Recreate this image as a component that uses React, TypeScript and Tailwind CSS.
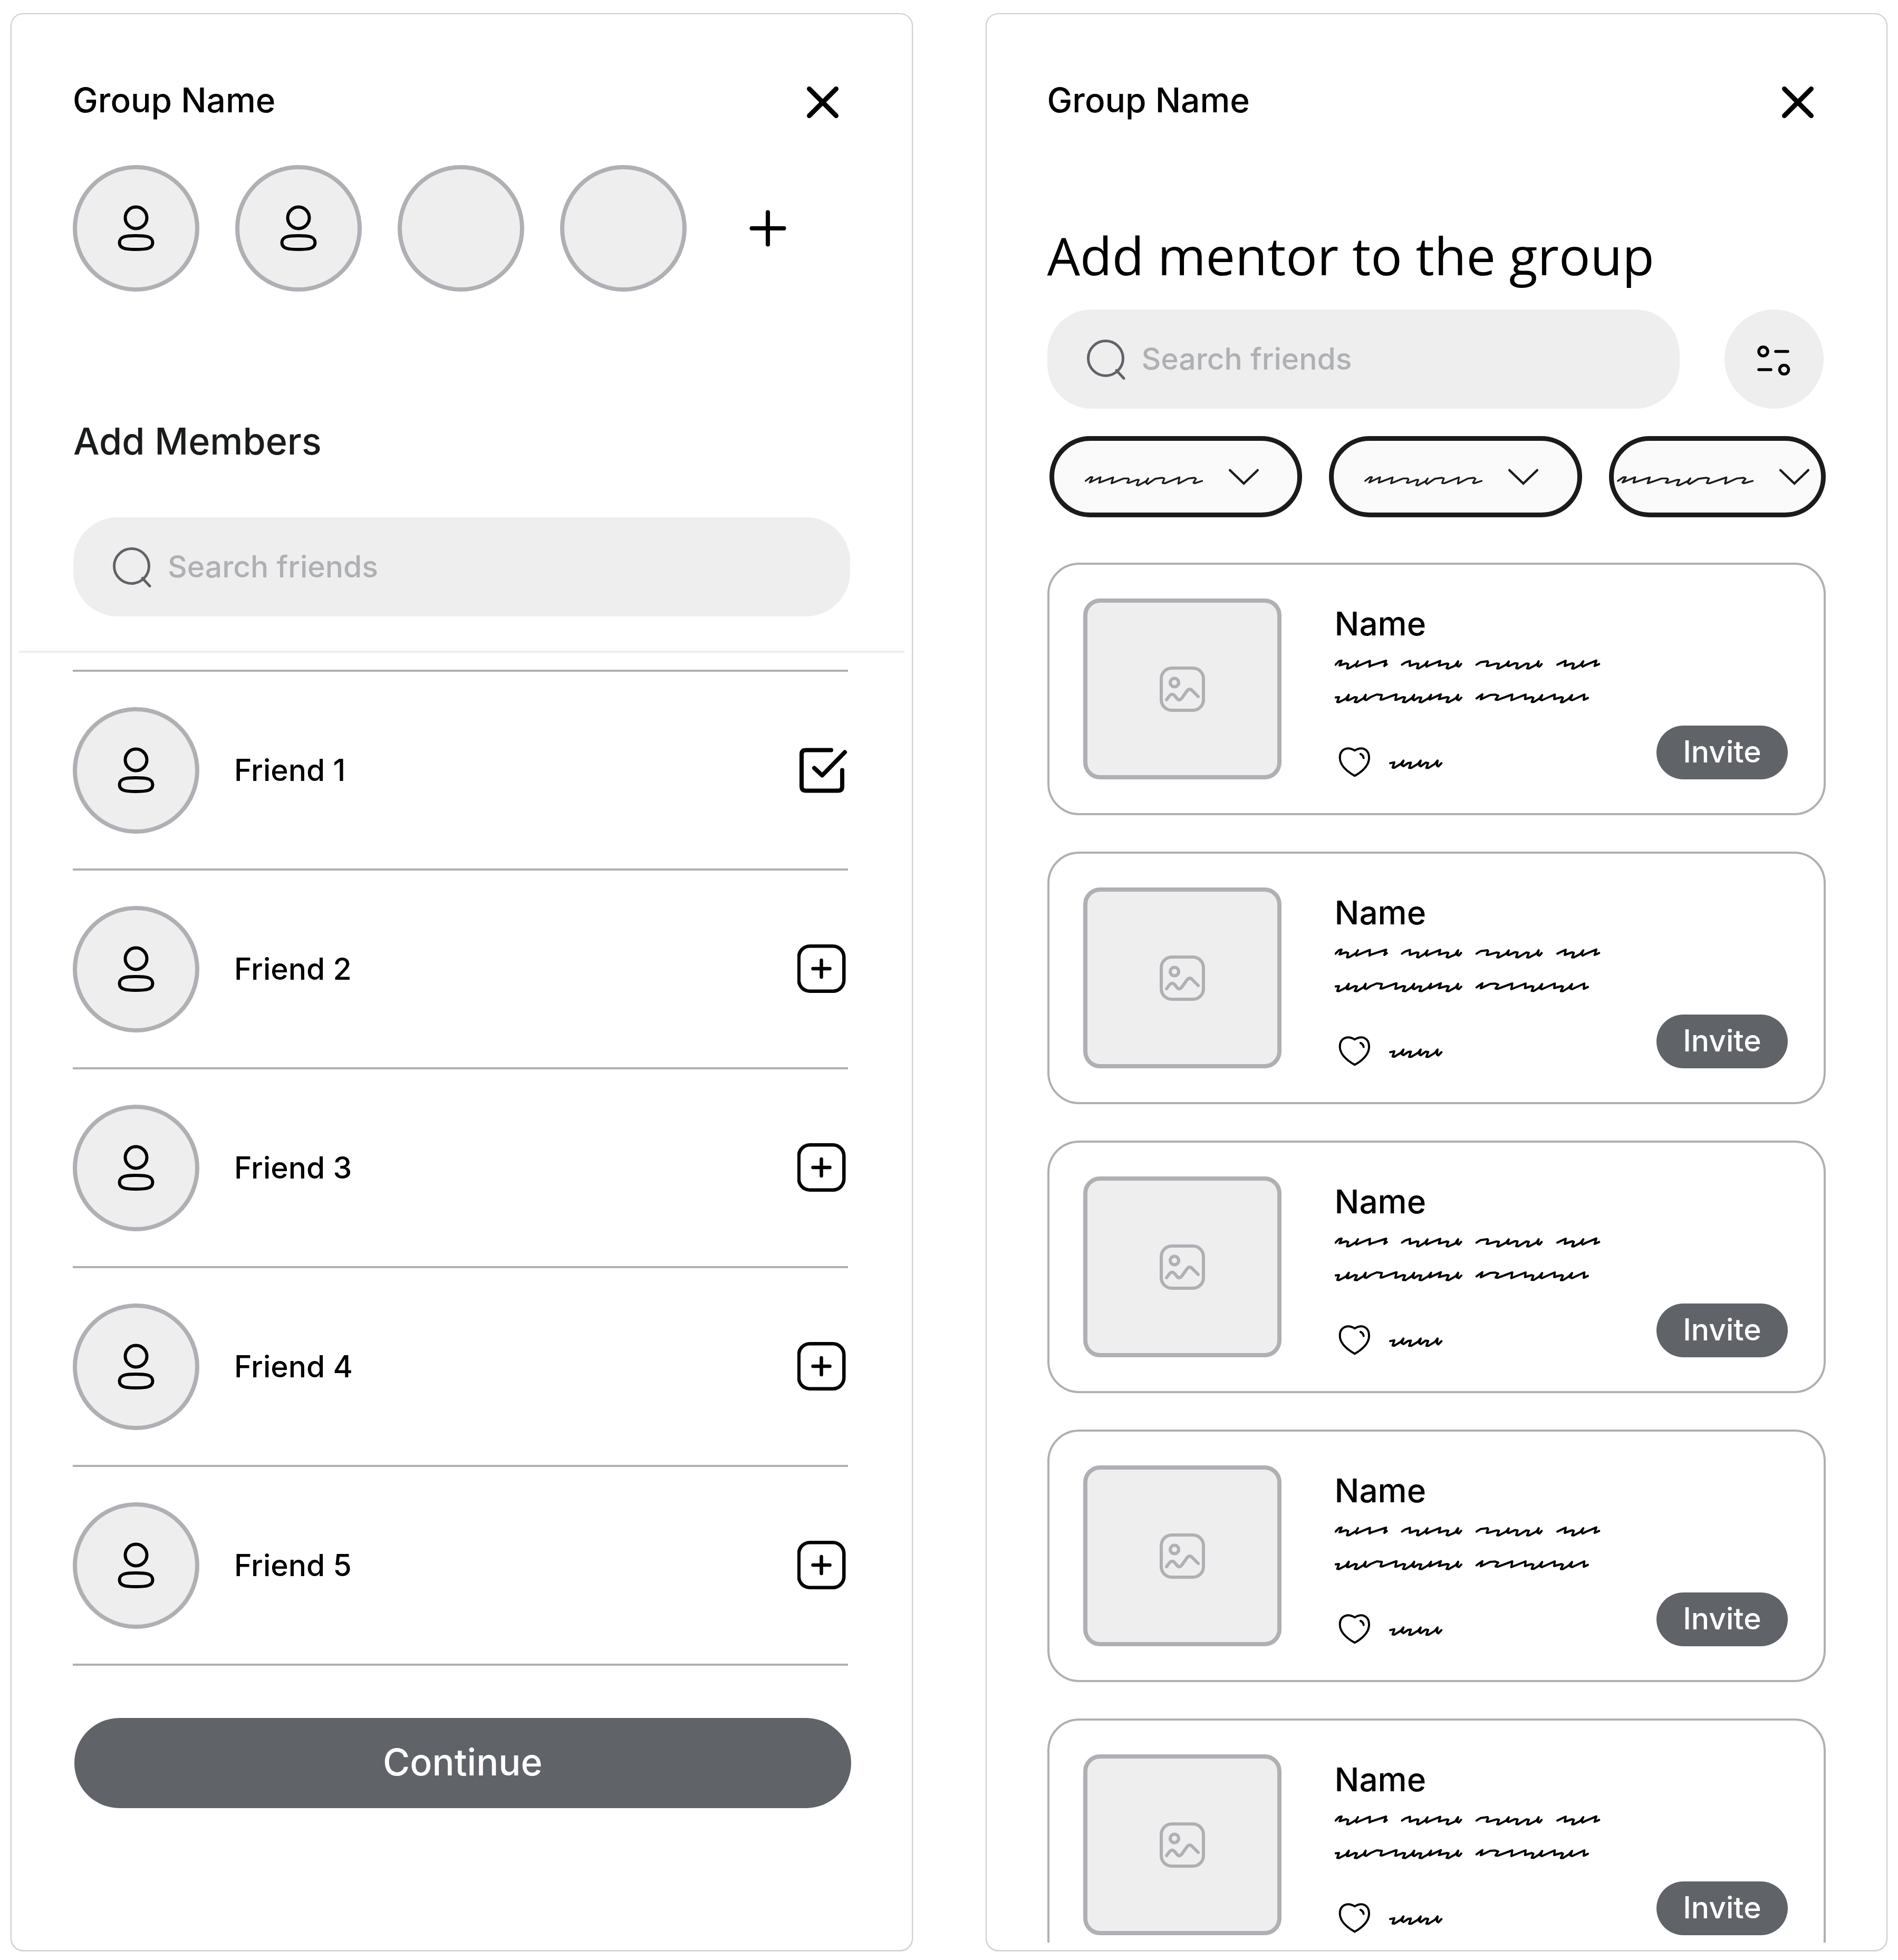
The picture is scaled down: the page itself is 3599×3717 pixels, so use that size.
import React from "react";
import { clsx } from "clsx";

const friends = [
  { id: 1, name: "Friend 1", added: true },
  { id: 2, name: "Friend 2", added: false },
  { id: 3, name: "Friend 3", added: false },
  { id: 4, name: "Friend 4", added: false },
  { id: 5, name: "Friend 5", added: false },
];

const mentors = [1, 2, 3, 4, 5];

function CloseIcon() {
  return (
    <svg viewBox="0 0 74 74" className="size-[74px]" fill="none" stroke="currentColor" strokeWidth="9" strokeLinecap="round">
      <path d="M11.5 11.5 62.5 62.5M62.5 11.5 11.5 62.5" />
    </svg>
  );
}

function PlusIcon() {
  return (
    <svg viewBox="0 0 76 76" className="size-[76px]" fill="none" stroke="currentColor" strokeWidth="8" strokeLinecap="round">
      <path d="M38 7.5V68.5M7.5 38H68.5" />
    </svg>
  );
}

function PersonIcon() {
  return (
    <svg viewBox="0 0 72 90" className="h-[90px] w-[72px]" fill="none" stroke="#000" strokeWidth="6">
      <circle cx="36" cy="25" r="20.5" />
      <path d="M36 59C54 59 67.5 60 67.5 72S54 85 36 85 4.5 84 4.5 72 18 59 36 59Z" />
    </svg>
  );
}

function SearchIcon() {
  return (
    <svg viewBox="0 -3 76 80" className="h-[80px] w-[76px] shrink-0" fill="none" stroke="#5f6368" strokeWidth="5" strokeLinecap="round">
      <circle cx="35.5" cy="35.5" r="33" />
      <path d="M56 58.5 70 73.5" />
    </svg>
  );
}

function CheckBoxIcon() {
  return (
    <svg viewBox="0 0 96 96" className="size-24" fill="none" stroke="currentColor" strokeWidth="8" strokeLinecap="round" strokeLinejoin="round">
      <path d="M64 9.5H16Q8 9.5 8 17.5V78.5Q8 86.5 16 86.5H77Q85 86.5 85 78.5V47.5" />
      <path d="M32 43.5 47 57.5 90 13.5" />
    </svg>
  );
}

function AddBoxIcon() {
  return (
    <svg viewBox="0 0 96 96" className="size-24" fill="none" stroke="currentColor" strokeWidth="6.5" strokeLinecap="round">
      <rect x="2.75" y="4.25" width="85.5" height="85.5" rx="21" />
      <path d="M45.5 31V63M29.5 47H61.5" />
    </svg>
  );
}

function FilterIcon() {
  return (
    <svg viewBox="0 0 66 62" className="h-[62px] w-[66px]" fill="none" stroke="#000" strokeWidth="5.5" strokeLinecap="round">
      <circle cx="12.5" cy="16.5" r="8.5" />
      <path d="M36 16.5H59M4 51H27" />
      <circle cx="52" cy="51" r="8.5" />
    </svg>
  );
}

function ImageIcon() {
  return (
    <svg viewBox="0 0 86 86" className="size-[86px]" fill="none" stroke="#aeb0b4" strokeWidth="6" strokeLinecap="round" strokeLinejoin="round">
      <rect x="3" y="3" width="80" height="80" rx="20" />
      <circle cx="28" cy="30.5" r="8" />
      <path d="M13 63 19 55Q24 50 29 56L34 62Q38 65 42 60L52 46Q57 40 62 46L73 57" />
    </svg>
  );
}

function HeartIcon() {
  return (
    <svg viewBox="54 546 184 172" className="h-[57px] w-[61px]" fill="none" stroke="currentColor" strokeWidth="12" strokeLinecap="round" strokeLinejoin="round">
      <path d="M147 565C102 538 62 560 62 606 62 650 100 683 147 710 194 683 229 648 229 606 229 560 192 538 147 565Z" />
      <path d="M180 585Q195 592 198 608" />
    </svg>
  );
}

// Handwritten placeholder lines
function ScribbleLong() {
  return (
    <svg viewBox="36 42 1512 66" className="h-[22px] w-[504px]" fill="none" stroke="currentColor" strokeWidth="12" strokeLinecap="round" strokeLinejoin="round">
      <path d="M40 77 60 57 75 53 63 81 100 69 112 73 106 98 118 97 160 72 168 57 155 80 160 88 172 82 236 55 233 88 242 82 328 54 318 84 332 74" />
      <path d="M418 77 436 65 464 55 462 84 500 70 512 71 504 97 514 98 550 76 564 58 555 80 558 88 575 80 636 55 628 83 672 70 682 72 672 96 682 99 720 82 738 57 732 84 742 88 755 72" />
      <path d="M842 77 866 62 905 57 908 64 900 84 912 83 955 70 970 72 960 98 970 98 1012 76 1026 58 1018 82 1026 85 1062 68 1076 70 1068 97 1078 98 1126 70 1140 72 1130 98 1142 98 1185 75 1196 57 1190 84 1200 88 1213 73" />
      <path d="M1302 77 1350 54 1344 84 1386 69 1396 72 1386 98 1396 98 1434 78 1450 57 1440 80 1446 88 1460 80 1524 53 1514 84 1540 73" />
    </svg>
  );
}

function ScribbleMedium() {
  return (
    <svg viewBox="36 235 1512 66" className="h-[22px] w-[504px]" fill="none" stroke="currentColor" strokeWidth="12" strokeLinecap="round" strokeLinejoin="round">
      <path d="M40 264 60 262 50 290 60 291 100 270 116 249 106 280 115 280 150 262 162 264 150 290 162 291 200 268 212 249 206 276 215 279 240 262 275 247 304 250 296 276 306 276 380 248 388 246 380 278 390 276 424 262 436 264 424 290 438 291 474 268 488 249 480 276 488 280 512 264 528 264 518 290 530 291 570 268 584 249 576 276 640 246 628 274 674 262 684 264 672 290 684 291 725 268 738 249 732 276 742 280 756 265" />
      <path d="M842 270 876 246 866 275 920 250 950 248 966 254 950 276 962 278 1046 247 1040 280 1122 247 1118 274 1156 262 1166 266 1156 290 1168 290 1200 270 1216 250 1206 276 1214 280 1288 247 1284 274 1326 262 1334 266 1322 291 1334 291 1368 270 1386 250 1376 276 1386 280 1456 247 1452 278 1476 267" />
    </svg>
  );
}

function ScribbleShort() {
  return (
    <svg viewBox="342 612 306 60" className="h-[20px] w-[102px]" fill="none" stroke="currentColor" strokeWidth="12" strokeLinecap="round" strokeLinejoin="round">
      <path d="M348 637 372 632 362 662 372 663 410 640 424 622 414 648 424 654 450 636 466 634 456 664 468 664 508 640 522 622 514 650 522 655 550 634 564 636 554 664 566 664 604 640 618 622 614 650 622 656 640 637" />
    </svg>
  );
}

function ScribbleChip({ className }: { className?: string }) {
  return (
    <svg viewBox="48 20 674 111" preserveAspectRatio="none" className={clsx("h-[37px] shrink-0", className)} fill="none" stroke="currentColor" strokeWidth="10" strokeLinecap="round" strokeLinejoin="round">
      <path d="M53 98 80 77 92 77 76 107 138 77 130 108 210 78 200 112 270 84 296 84 300 92 290 108 298 110 345 92 356 92 344 122 352 124 400 98 410 84 398 108 406 116 450 86 490 80 502 84 492 110 504 112 588 78 582 114 640 84 674 80 682 86 668 108 674 112 718 98" />
    </svg>
  );
}

function ChevronIcon() {
  return (
    <svg viewBox="868 25 176 94" className="h-[31px] w-[59px] shrink-0" fill="none" stroke="currentColor" strokeWidth="13" strokeLinecap="round">
      <path d="M876 33 956 110 1036 33" />
    </svg>
  );
}

function PanelHeader() {
  return (
    <header className="flex items-start justify-between pr-4">
      <h2 className="text-[64px] leading-[66px] font-medium">Group Name</h2>
      <button type="button" aria-label="Close">
        <CloseIcon />
      </button>
    </header>
  );
}

function Avatar({ empty = false }: { empty?: boolean }) {
  return (
    <div className="flex size-60 shrink-0 items-center justify-center rounded-full border-8 border-[#aeb0b4] bg-[#eee]">
      {!empty && <PersonIcon />}
    </div>
  );
}

function SearchField({ id, className }: { id: string; className?: string }) {
  return (
    <label htmlFor={id} className={clsx("flex h-[188px] items-center gap-7 rounded-[84px] bg-[#eee] px-[75px]", className)}>
      <SearchIcon />
      <input
        id={id}
        type="search"
        aria-label="Search friends"
        placeholder="Search friends"
        className="w-full min-w-0 bg-transparent text-[57px] font-medium outline-none placeholder:text-[#aeb0b4]"
      />
    </label>
  );
}

function FilterChip({ id, className, scribble }: { id: string; className?: string; scribble: string }) {
  return (
    <div className={clsx("relative flex h-[154px] items-center rounded-full border-[9px] border-[#1a1b1b] bg-[#fafafa] text-[#1a1b1b]", className)}>
      <ScribbleChip className={scribble} />
      <ChevronIcon />
      <select id={id} aria-label={id} className="absolute inset-0 size-full cursor-pointer opacity-0" />
    </div>
  );
}

function MentorCard() {
  return (
    <li className="flex shrink-0 rounded-[60px] border-4 border-[#aeb0b4] py-16 pr-[68px] pl-16">
      <div className="flex h-[343px] w-[376px] shrink-0 items-center justify-center rounded-[32px] border-8 border-[#aeb0b4] bg-[#eee]">
        <ImageIcon />
      </div>
      <div className="ml-[101px] flex-1 pt-[15px]">
        <h3 className="text-[62px] leading-[66px] font-medium">Name</h3>
        <div className="mt-[33px] flex flex-col gap-[42px]">
          <ScribbleLong />
          <ScribbleMedium />
        </div>
        <div className="mt-[82px] flex items-center gap-[35px] pl-[7px]">
          <HeartIcon />
          <div className="pt-1.5">
            <ScribbleShort />
          </div>
        </div>
      </div>
      <button type="button" className="h-[102px] w-[249px] self-end rounded-full bg-[#606368] pb-0.5 text-[57px] leading-[60px] font-medium text-white">
        Invite
      </button>
    </li>
  );
}

function AddMembersPanel() {
  return (
    <section className="flex flex-col rounded-3xl border-2 border-[#cfcfcf] bg-white px-[14px] pt-[130px] shadow-sm">
      <div className="px-[102px]">
        <PanelHeader />
        <div className="mt-[82px] flex items-center gap-[68px]">
          <Avatar />
          <Avatar />
          <Avatar empty />
          <Avatar empty />
          <button type="button" aria-label="Add member" className="ml-12">
            <PlusIcon />
          </button>
        </div>
      </div>
      <div className="px-[103px]">
        <h1 className="mt-[248px] text-[70px] leading-[72px] font-medium text-[#1a1b1b]">Add Members</h1>
        <SearchField id="member-search" className="mt-[108px]" />
      </div>
      <hr className="mt-[65px] border-t-4 border-[#eee]" />
      <ul className="mt-8 mr-[107px] ml-[102px] border-t-4 border-[#aeb0b4]">
        {friends.map((friend) => (
          <li key={friend.id} className="flex h-[377px] items-center gap-[66px] border-b-4 border-[#aeb0b4]">
            <Avatar />
            <span className="flex-1 text-[57px] font-medium">{friend.name}</span>
            <button type="button" aria-label={friend.added ? "Added" : "Add"}>
              {friend.added ? <CheckBoxIcon /> : <AddBoxIcon />}
            </button>
          </li>
        ))}
      </ul>
      <button type="button" className="mt-[99px] mr-[101px] ml-[105px] h-[171px] rounded-full bg-[#606368] pb-1 text-[70px] font-medium text-white">
        Continue
      </button>
    </section>
  );
}

function AddMentorPanel() {
  return (
    <section className="flex flex-col rounded-3xl border-2 border-[#cfcfcf] bg-white px-[115px] pt-[130px] pb-[14px] shadow-sm">
      <PanelHeader />
      <h1 className="mt-[204px] font-['Open_Sans','Liberation_Sans',sans-serif] text-[99px] leading-[98px]">Add mentor to the group</h1>
      <div className="mt-[54px] flex items-center gap-[85px] pr-1">
        <SearchField id="mentor-search" className="flex-1" />
        <button type="button" aria-label="Filters" className="flex size-[188px] items-center justify-center rounded-full bg-[#eee]">
          <FilterIcon />
        </button>
      </div>
      <div className="mt-[52px] ml-1 grid grid-cols-[7fr_7fr_6fr] gap-[51px]">
        <FilterChip id="filter-1" className="gap-12 pl-[58px]" scribble="w-[224px]" />
        <FilterChip id="filter-2" className="gap-12 pl-[58px]" scribble="w-[224px]" />
        <FilterChip id="filter-3" className="gap-12 pl-[6px]" scribble="w-[259px]" />
      </div>
      <ul className="mt-[86px] flex min-h-0 flex-1 flex-col gap-[69px] overflow-hidden">
        {mentors.map((id) => (
          <MentorCard key={id} />
        ))}
      </ul>
    </section>
  );
}

export default function App() {
  return (
    <main className="grid h-screen grid-cols-2 grid-rows-[minmax(0,1fr)] gap-[138px] bg-white px-5 pt-[25px] pb-[17px] font-['Inter','Liberation_Sans',sans-serif] text-black">
      <AddMembersPanel />
      <AddMentorPanel />
    </main>
  );
}
